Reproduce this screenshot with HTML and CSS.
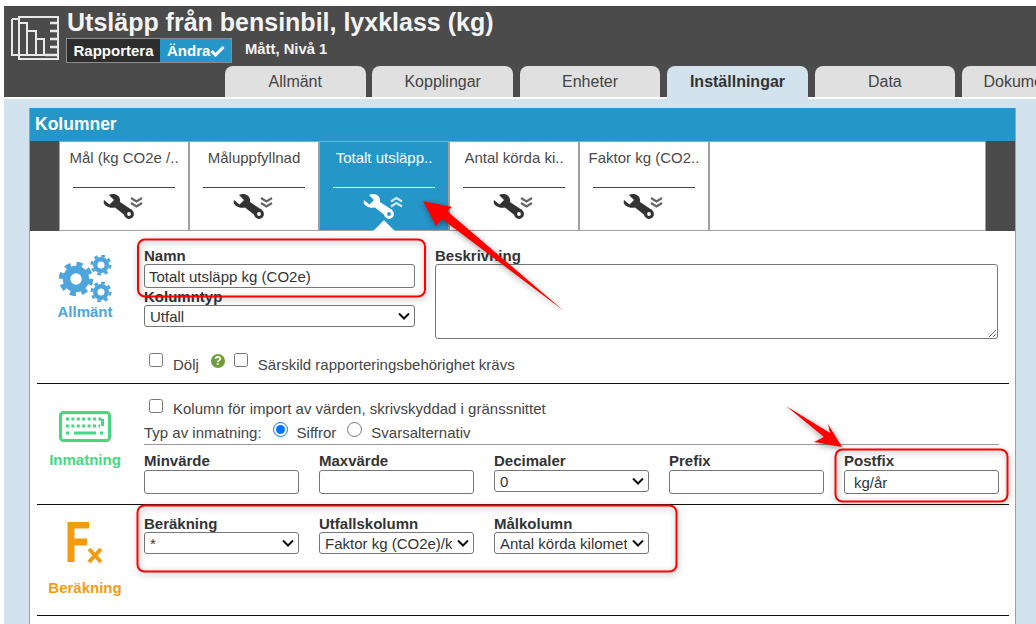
FILE: index.html
```html
<!DOCTYPE html>
<html lang="sv">
<head>
<meta charset="utf-8">
<title>Utsläpp från bensinbil</title>
<link rel="stylesheet" href="styles.css">
</head>
<body>
<svg class="defs" width="0" height="0" aria-hidden="true">
  <symbol id="wrench" viewBox="0 0 42 26">
    <path d="M1 7 L6.5 11.5 L11 7 L6 2 C11 -0.5 18 2 17 9 L29 17 L24 24 L12 14.5 C6 16 -1 12 1 7 Z" fill="currentColor"/>
    <circle cx="26" cy="21" r="3.4" fill="var(--tab-bg)" stroke="currentColor" stroke-width="3"/>
    <path d="M28 5 L33.5 8.5 L39 5 M28 10 L33.5 13.5 L39 10" class="chev"/>
  </symbol>
  <symbol id="wrench-up" viewBox="0 0 42 26">
    <path d="M1 7 L6.5 11.5 L11 7 L6 2 C11 -0.5 18 2 17 9 L29 17 L24 24 L12 14.5 C6 16 -1 12 1 7 Z" fill="currentColor"/>
    <circle cx="26" cy="21" r="3.4" fill="var(--tab-bg)" stroke="currentColor" stroke-width="3"/>
    <path d="M28 8.5 L33.5 5 L39 8.5 M28 13.5 L33.5 10 L39 13.5" class="chev"/>
  </symbol>
</svg>

<div class="page">
  <header class="head">
    <div class="head-top">
      <svg class="logo" width="50" height="50" viewBox="0 0 50 50" aria-hidden="true">
        <g fill="none" stroke="#e8e8e8" stroke-width="2">
          <path d="M8 5 H47 V47 H8 Z" />
          <path d="M1 7 H8 M1 7 V43 H8" />
          <path d="M8 11 H16 V43" />
          <path d="M16 19 H25 V43" />
          <path d="M25 27 H33 V43 H8" />
          <path d="M39 11 H47 M39 19 H47 M39 27 H47 M39 35 H47 M34 43 H47" stroke-width="2.4"/>
        </g>
      </svg>
      <div class="head-text">
        <h1 class="title">Utsläpp från bensinbil, lyxklass (kg)</h1>
        <div class="head-meta">
          <div class="toggle">
            <span class="toggle-off">Rapportera</span>
            <span class="toggle-on">Ändra<svg class="check" width="15" height="12" viewBox="0 0 15 12" aria-hidden="true"><path d="M1.5 6 L5.5 10 L13.5 2" fill="none" stroke="#fff" stroke-width="3"/></svg></span>
          </div>
          <span class="level">Mått, Nivå 1</span>
        </div>
      </div>
    </div>
    <nav class="main-tabs">
      <a class="main-tab">Allmänt</a>
      <a class="main-tab">Kopplingar</a>
      <a class="main-tab">Enheter</a>
      <a class="main-tab active">Inställningar</a>
      <a class="main-tab">Data</a>
      <a class="main-tab main-tab-last">Dokumentation</a>
    </nav>
  </header>

  <main class="content">
    <section class="panel">
      <h2 class="panel-title">Kolumner</h2>
      <div class="col-tabs">
        <div class="col-tab"><span class="col-name">Mål (kg CO2e /..</span><svg class="tool"><use href="#wrench"/></svg></div>
        <div class="col-tab"><span class="col-name">Måluppfyllnad</span><svg class="tool"><use href="#wrench"/></svg></div>
        <div class="col-tab selected"><span class="col-name">Totalt utsläpp..</span><svg class="tool"><use href="#wrench-up"/></svg></div>
        <div class="col-tab"><span class="col-name">Antal körda ki..</span><svg class="tool"><use href="#wrench"/></svg></div>
        <div class="col-tab"><span class="col-name">Faktor kg (CO2..</span><svg class="tool"><use href="#wrench"/></svg></div>
        <div class="col-rest"></div>
      </div>

      <div class="block block-general">
        <div class="side side-blue">
          <svg class="gears" width="53" height="47" viewBox="0 0 53 47" aria-hidden="true">
            <g fill="none" stroke="#4ea4dc">
              <circle cx="17" cy="24" r="15" stroke-width="4.4" stroke-dasharray="6 5.78"/>
              <circle cx="17" cy="24" r="9.5" stroke-width="7.5"/>
              <circle cx="42" cy="10" r="9.2" stroke-width="2.6" stroke-dasharray="3.6 3.62"/>
              <circle cx="42" cy="10" r="5.75" stroke-width="4.5"/>
              <circle cx="42" cy="37" r="9.2" stroke-width="2.6" stroke-dasharray="3.6 3.62"/>
              <circle cx="42" cy="37" r="5.75" stroke-width="4.5"/>
            </g>
          </svg>
          <span>Allmänt</span>
        </div>
        <div class="block-body">
          <div class="general-row">
            <div class="general-left">
              <label class="fld-label">Namn</label>
              <input class="ctl ctl-name" type="text" value="Totalt utsläpp kg (CO2e)">
              <label class="fld-label label-tight">Kolumntyp</label>
              <select class="ctl ctl-select ctl-type"><option>Utfall</option></select>
            </div>
            <div class="general-right">
              <label class="fld-label">Beskrivning</label>
              <textarea class="ctl ctl-area"></textarea>
            </div>
          </div>
          <div class="check-row">
            <input class="box" type="checkbox">
            <span class="opt">Dölj</span>
            <svg class="help" width="14" height="14" viewBox="0 0 14 14" aria-hidden="true"><circle cx="7" cy="7" r="7" fill="#6d9c3a"/><text x="7" y="11" text-anchor="middle" class="help-q">?</text></svg>
            <input class="box" type="checkbox">
            <span class="opt">Särskild rapporteringsbehörighet krävs</span>
          </div>
        </div>
      </div>

      <div class="block block-input">
        <div class="side side-green">
          <svg class="keyboard" width="52" height="32" viewBox="0 0 52 32" aria-hidden="true">
            <rect x="1.5" y="1.5" width="49" height="28" rx="3" fill="none" stroke="#44d97f" stroke-width="3"/>
            <path d="M7 8 H44 M7 15 H41 M7 22 H11 M41 22 H45" fill="none" stroke="#44d97f" stroke-width="3" stroke-dasharray="3 2.4"/>
            <path d="M15 22 H37 M43.5 15 V8" fill="none" stroke="#44d97f" stroke-width="3"/>
          </svg>
          <span>Inmatning</span>
        </div>
        <div class="block-body">
          <div class="import-row">
            <input class="box" type="checkbox">
            <span class="opt">Kolumn för import av värden, skrivskyddad i gränssnittet</span>
          </div>
          <div class="radio-row">
            <span class="radio-title">Typ av inmatning:</span>
            <input class="radio" type="radio" name="kind" checked>
            <span class="opt">Siffror</span>
            <input class="radio" type="radio" name="kind">
            <span class="opt">Svarsalternativ</span>
          </div>
          <div class="fields">
            <div class="field"><label class="fld-label">Minvärde</label><input class="ctl ctl-num" type="text"></div>
            <div class="field"><label class="fld-label">Maxvärde</label><input class="ctl ctl-num" type="text"></div>
            <div class="field"><label class="fld-label">Decimaler</label><select class="ctl ctl-select ctl-dec"><option>0</option></select></div>
            <div class="field"><label class="fld-label">Prefix</label><input class="ctl ctl-num" type="text"></div>
            <div class="field"><label class="fld-label">Postfix</label><input class="ctl ctl-num ctl-post" type="text" value="kg/år"></div>
          </div>
        </div>
      </div>

      <div class="block block-calc">
        <div class="side side-orange">
          <svg class="fx" width="36" height="42" viewBox="0 0 36 42" aria-hidden="true">
            <path d="M4 40 V3 H22 M4 20 H20" fill="none" stroke="#f39c12" stroke-width="7"/>
            <path d="M22 27 L34 40 M34 27 L22 40" fill="none" stroke="#f39c12" stroke-width="4"/>
          </svg>
          <span>Beräkning</span>
        </div>
        <div class="block-body">
          <div class="fields">
            <div class="field"><label class="fld-label">Beräkning</label><select class="ctl ctl-select ctl-calc"><option>*</option></select></div>
            <div class="field"><label class="fld-label">Utfallskolumn</label><select class="ctl ctl-select ctl-calc"><option>Faktor kg (CO2e)/km</option></select></div>
            <div class="field"><label class="fld-label">Målkolumn</label><select class="ctl ctl-select ctl-calc"><option>Antal körda kilometer</option></select></div>
          </div>
        </div>
      </div>
    </section>
  </main>

  <svg class="marks" width="1036" height="624" viewBox="0 0 1036 624" aria-hidden="true">
    <rect class="mark-box" x="138" y="239.5" width="287" height="57" rx="7"/>
    <rect class="mark-box" x="835.5" y="449.5" width="172" height="52" rx="7"/>
    <rect class="mark-box" x="137.5" y="505.5" width="539" height="66" rx="7"/>
    <polygon class="mark-arrow" points="423,201 452,207 447,211 564,311 442,219 436,226"/>
    <polygon class="mark-arrow" points="786,406 830,433 828,424 842,447 814,442 824,437"/>
  </svg>
</div>
</body>
</html>
```

FILE: styles.css
```css
* { box-sizing: border-box; }

html, body {
  margin: 0;
  height: 624px;
  overflow: hidden;
  background: #fff;
}

body {
  font-family: "Liberation Sans", Arial, sans-serif;
  font-size: 15px;
  color: #333;
}

.defs { position: absolute; }

.page {
  position: relative;
  width: 1036px;
  height: 624px;
  padding: 6px 0 0 4px;
  overflow: hidden;
}

/* header */
.head {
  background: #4b4b4b;
  height: 91px;
  display: flex;
  flex-direction: column;
  justify-content: space-between;
  position: relative;
  z-index: 1;
}

.head-top { display: flex; }

.logo { margin: 6px 5px 0 7px; flex: none; }

.title {
  margin: 0 0 0 1px;
  font-size: 25px;
  line-height: 32px;
  font-weight: 700;
  color: #f4f4f4;
  white-space: nowrap;
}

.head-meta {
  display: flex;
  align-items: center;
}

.toggle {
  display: flex;
  width: 166px;
  height: 25px;
  border: 1px solid #8c8c8c;
  font-weight: 700;
  font-size: 15px;
  line-height: 23px;
  color: #fff;
}

.toggle-off {
  width: 93px;
  background: #2d2d2d;
  text-align: center;
}

.toggle-on {
  flex: 1;
  background: #2596c8;
  padding-left: 7px;
  white-space: nowrap;
}

.check { vertical-align: -1px; }

.level {
  margin: -4px 0 0 13px;
  font-weight: 700;
  font-size: 14.8px;
  color: #f4f4f4;
}

.main-tabs {
  display: flex;
  gap: 6.8px;
  padding-left: 221px;
  height: 31px;
}

.main-tab {
  flex: none;
  width: 140.6px;
  background: #e0e0e0;
  border-radius: 8px 8px 0 0;
  text-align: center;
  font-size: 16px;
  line-height: 31px;
  color: #444;
  white-space: nowrap;
}

.main-tab-last { padding-left: 10px; }

.main-tab.active {
  background: #d2e3ee;
  font-weight: 700;
  color: #333;
  height: 33px;
}

/* main */
.content {
  margin-top: 2px;
  height: 526px;
  background: #d2e3ee;
  padding: 9px 20px 0 25px;
}

.panel {
  background: #fff;
  border-left: 1px solid #a0a0a0;
  border-right: 1px solid #a0a0a0;
  height: 520px;
}

.panel-title {
  margin: 0;
  height: 33px;
  background: #2596c8;
  color: #fff;
  font-size: 17.5px;
  line-height: 33px;
  padding-left: 5px;
  font-weight: 700;
}

.col-tabs {
  display: flex;
  height: 90px;
  background: #4b4b4b;
  padding: 0 29px;
}

.col-tab {
  --tab-bg: #fff;
  --chev: #666;
  position: relative;
  flex: none;
  width: 130px;
  background: var(--tab-bg);
  border: 1px solid #a0a0a0;
  color: #4a4a4a;
  display: flex;
  flex-direction: column;
  align-items: center;
  padding-top: 7px;
}

.col-name {
  display: flex;
  justify-content: center;
  width: 102px;
  height: 39px;
  line-height: 17px;
  white-space: nowrap;
  border-bottom: 1px solid #444;
  font-size: 15px;
}

.tool {
  width: 42px;
  height: 26px;
  margin-top: 5px;
  color: #333;
}

.chev {
  fill: none;
  stroke: var(--chev);
  stroke-width: 2.2;
}

.col-tab.selected {
  --tab-bg: #2596c8;
  --chev: #d5eaf5;
  color: #fff;
}

.col-tab.selected .col-name { border-bottom-color: #fff; }
.col-tab.selected .tool { color: #fff; }

.col-tab.selected::after {
  content: "";
  position: absolute;
  left: 54px;
  bottom: -14px;
  width: 20px;
  height: 20px;
  background: #fff;
  transform: rotate(45deg);
  clip-path: polygon(0 0, 100% 0, 0 100%);
}

.col-rest {
  flex: 1;
  background: #fff;
  border: 1px solid #a0a0a0;
}

/* sections */
.block {
  display: flex;
  margin: 0 6px 0 7px;
  border-bottom: 1px solid #111;
}

.block-general { height: 153px; }
.block-input { height: 121px; }
.block-calc { height: 111px; }

.side {
  flex: none;
  width: 107px;
  padding-right: 11px;
  display: flex;
  flex-direction: column;
  align-items: center;
  font-weight: 700;
  font-size: 15px;
  line-height: 16px;
}

.side-blue { color: #4ea4dc; padding-top: 24px; }
.side-green { color: #44d97f; padding-top: 27px; }
.side-orange { color: #f39c12; padding-top: 17px; }

.side-blue span { margin-top: 2px; }
.side-green span { margin-top: 9px; }
.side-orange span { margin-top: 16px; }

.block-body { flex: 1; min-width: 0; }

.fld-label {
  display: block;
  font-weight: 700;
  font-size: 15px;
  line-height: 13px;
  margin-bottom: 2px;
  color: #333;
}

.ctl {
  display: block;
  margin: 0;
  background: #fff;
  border: 1px solid #767676;
  border-radius: 3px;
  font-family: "Liberation Sans", Arial, sans-serif;
  font-size: 15px;
  color: #333;
  padding: 1px 4px;
}

.block-general .block-body { padding-top: 18px; }

.general-row { display: flex; }

.general-left { width: 271px; }

.general-right { margin-left: 20px; }

.ctl-name { width: 271px; height: 24px; }

.label-tight { margin-top: 2px; }

.ctl-select {
  appearance: none;
  padding: 0 21px 0 5px;
  background-image: url("data:image/svg+xml,%3Csvg xmlns='http://www.w3.org/2000/svg' width='12' height='8' viewBox='0 0 12 8'%3E%3Cpath d='M1 1.5 L6 6.5 L11 1.5' fill='none' stroke='%23111' stroke-width='2'/%3E%3C/svg%3E");
  background-repeat: no-repeat;
  background-position: right 4px center;
}

.ctl-type { width: 271px; height: 22px; }

.ctl-area {
  width: 563px;
  height: 75px;
  resize: both;
}

.check-row {
  display: flex;
  align-items: center;
  height: 20px;
  margin-top: 13px;
}

.box {
  width: 14px;
  height: 14px;
  margin: 0 0 4px 5px;
  flex: none;
}

.opt {
  color: #444;
  margin-left: 10px;
  padding-top: 5px;
  white-space: nowrap;
}

.help { margin: 0 0 2px 12px; flex: none; }

.help-q {
  fill: #fff;
  font-size: 12px;
  font-weight: 700;
}

.check-row .help + .box { margin-left: 9px; }

.block-input .block-body { padding-top: 12px; }

.block-input .fld-label { margin-bottom: 3px; }

.import-row {
  display: flex;
  align-items: center;
  height: 20px;
}

.import-row .box { margin-bottom: 0; }

.radio-row {
  display: flex;
  align-items: center;
  height: 28px;
  width: 855px;
  margin: 1px 0 9px;
  padding-top: 4px;
  border-bottom: 1px solid #999;
  color: #444;
}

.radio {
  width: 15px;
  height: 15px;
  margin: 0 0 6px 11px;
  flex: none;
}

.radio-row .opt { padding-top: 0; margin-left: 9px; }

.fields { display: flex; gap: 20px; }

.field { width: 155px; flex: none; }

.ctl-num { width: 155px; height: 24px; }

.ctl-post { padding-left: 9px; }

.ctl-dec { width: 155px; height: 22px; }

.block-calc .block-body { padding-top: 12px; }

.ctl-calc { width: 155px; height: 22px; }

/* annotation layer */
.marks {
  position: absolute;
  left: 0;
  top: 0;
  z-index: 2;
  pointer-events: none;
}

.mark-box {
  fill: none;
  stroke: #f00;
  stroke-width: 2;
  filter: drop-shadow(1px 2px 3px rgba(0, 0, 0, 0.35));
}

.mark-arrow {
  fill: #f00;
  filter: drop-shadow(1px 2px 3px rgba(0, 0, 0, 0.4));
}
```
